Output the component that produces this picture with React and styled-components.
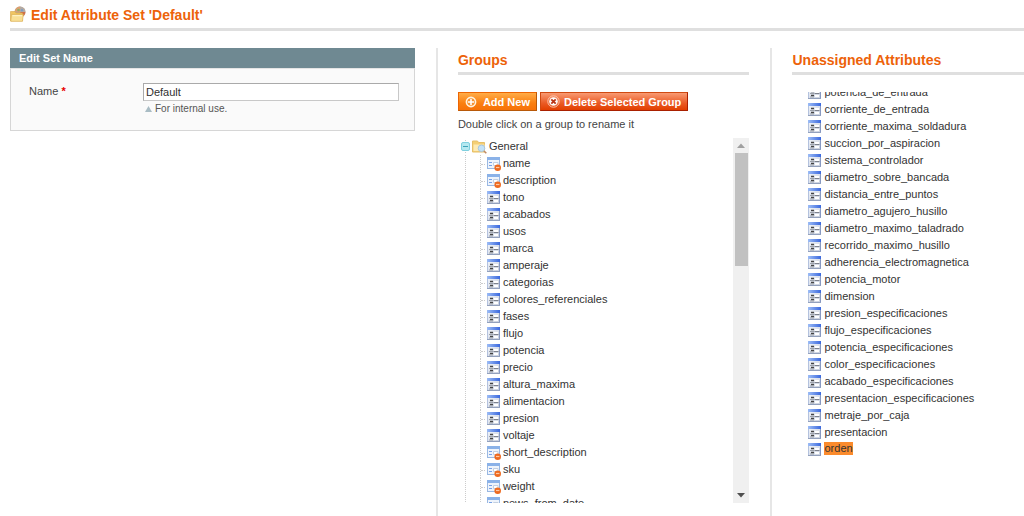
import React, { useState } from "react";
import styled, { createGlobalStyle, css } from "styled-components";

const GlobalStyle = createGlobalStyle`
  * {
    box-sizing: border-box;
  }

  body {
    margin: 0;
    background: #fff;
    color: #333;
    font-family: "Liberation Sans", Arial, sans-serif;
    font-size: 11px;
    line-height: 16px;
  }
`;

const Page = styled.div`
  display: flex;
  flex-direction: column;
  min-height: 100vh;
  padding-left: 10px;
`;

const PageHeader = styled.header`
  display: flex;
  align-items: center;
  gap: 5px;
  height: 31px;
  margin-bottom: 17px;
  border-bottom: 3px solid #dfdfdf;
`;

const PageTitle = styled.h1`
  margin: 0;
  padding-top: 2px;
  color: #ed6209;
  font-size: 14px;
  line-height: 16px;
`;

const Columns = styled.main`
  flex: 1;
  display: grid;
  grid-template-columns: 42% 33% 1fr;
`;

const Column = styled.section`
  min-width: 0;
  padding-right: ${({ $flush }) => ($flush ? "0" : "21px")};

  & + & {
    padding-left: 20px;
    border-left: 2px solid #e6e6e6;
  }
`;

const PanelTitle = styled.h2`
  margin: 0;
  padding: 0 9px;
  background: #6f8992;
  color: #fff;
  font-size: 11px;
  line-height: 20px;
`;

const PanelBody = styled.form`
  display: grid;
  grid-template-columns: 114px 1fr;
  padding: 14px 15px 13px 18px;
  border: 1px solid #d6d6d6;
  border-top-color: #e4e4e4;
  background: #fafafa;
`;

const FieldLabel = styled.label`
  color: #444;
`;

const Required = styled.span`
  color: #e80000;
  font-weight: bold;
`;

const TextInput = styled.input`
  display: block;
  width: 100%;
  height: 18px;
  padding: 0 2px;
  border: 1px solid;
  border-color: #aaa #c8c8c8 #c8c8c8 #aaa;
  background: #fff;
  color: #2f2f2f;
  font: inherit;
`;

const Hint = styled.p`
  display: flex;
  align-items: center;
  gap: 3px;
  margin: 0;
  padding-left: 2px;
  color: #555;
  font-size: 10px;
`;

const SectionTitle = styled.h2`
  margin: 0 0 17px;
  padding: 4px 0;
  border-bottom: 3px solid #dfdfdf;
  color: #ed6209;
  font-size: 14px;
  line-height: 16px;
`;

const ButtonRow = styled.div`
  display: flex;
  gap: 3px;
`;

const tones = {
  add: css`
    border-color: #ed6502 #b85909 #b85909 #ed6502;
    background: linear-gradient(#ffac47, #fa7f10 60%, #f77208);
  `,
  remove: css`
    border-color: #d04a12 #a92000 #a92000 #d04a12;
    background: linear-gradient(#f99a72, #ea5a24 60%, #e23f00);
  `,
};

const Button = styled.button`
  display: flex;
  align-items: center;
  gap: ${({ $tone }) => ($tone === "add" ? "6px" : "4px")};
  height: 19px;
  padding: 0 6px;
  border: 1px solid;
  color: #fff;
  font: inherit;
  font-weight: bold;
  white-space: nowrap;
  cursor: pointer;
  ${({ $tone }) => tones[$tone]}
`;

const Note = styled.p`
  margin: 0;
  padding: 5px 0 6px;
  color: #444;
`;

const TreeBox = styled.div`
  display: flex;
  height: 365px;
  overflow: hidden;
`;

const Tree = styled.ul`
  flex: 1;
  margin: 0;
  padding: 0 0 0 2px;
  list-style: none;
`;

const Branch = styled.ul`
  margin: 0 0 0 5px;
  padding: 0 0 0 14px;
  border-left: 1px dotted #ccc;
  list-style: none;
`;

const Row = styled.div`
  display: flex;
  align-items: flex-start;
  gap: 2px;
  height: 17px;

  svg {
    flex: none;
    margin-top: 2px;
  }
`;

const Leaf = styled(Row).attrs({ as: "li" })`
  border-left: 1px dotted #ccc;

  &::before {
    content: "";
    width: 4px;
    height: 9px;
    border-bottom: 1px dotted #ccc;
  }
`;

const Toggle = styled.button`
  display: flex;
  padding: 0;
  border: 0;
  background: none;
  cursor: pointer;
`;

const ScrollTrack = styled.div`
  display: flex;
  flex-direction: column;
  align-items: center;
  width: 16px;
  background: #f0f0f0;
`;

const ScrollArrow = styled.span`
  display: grid;
  place-items: center;
  width: 100%;
  height: 15px;
`;

const ScrollThumb = styled.div`
  width: 13px;
  height: 113px;
  margin-bottom: auto;
  background: #c1c1c1;
`;

const AttributeList = styled.ul`
  display: flex;
  flex-direction: column;
  justify-content: flex-end;
  height: 366px;
  margin: 0;
  padding: 0 0 0 16px;
  overflow: hidden;
  list-style: none;
`;

const AttributeRow = styled(Row).attrs({ as: "li" })`
  flex: none;
`;

const Label = styled.span`
  line-height: ${({ $selected }) => ($selected ? "13px" : "16px")};
  margin-top: ${({ $selected }) => ($selected ? "1px" : "0")};
  background: ${({ $selected }) => ($selected ? "#fb8b2c" : "none")};
`;

const groupAttributes = [
  { name: "name", system: true },
  { name: "description", system: true },
  { name: "tono" },
  { name: "acabados" },
  { name: "usos" },
  { name: "marca" },
  { name: "amperaje" },
  { name: "categorias" },
  { name: "colores_referenciales" },
  { name: "fases" },
  { name: "flujo" },
  { name: "potencia" },
  { name: "precio" },
  { name: "altura_maxima" },
  { name: "alimentacion" },
  { name: "presion" },
  { name: "voltaje" },
  { name: "short_description", system: true },
  { name: "sku", system: true },
  { name: "weight", system: true },
  { name: "news_from_date", system: true },
];

const unassigned = [
  "potencia_de_entrada",
  "corriente_de_entrada",
  "corriente_maxima_soldadura",
  "succion_por_aspiracion",
  "sistema_controlador",
  "diametro_sobre_bancada",
  "distancia_entre_puntos",
  "diametro_agujero_husillo",
  "diametro_maximo_taladrado",
  "recorrido_maximo_husillo",
  "adherencia_electromagnetica",
  "potencia_motor",
  "dimension",
  "presion_especificaciones",
  "flujo_especificaciones",
  "potencia_especificaciones",
  "color_especificaciones",
  "acabado_especificaciones",
  "presentacion_especificaciones",
  "metraje_por_caja",
  "presentacion",
  "orden",
];

function TitleIcon() {
  return (
    <svg width="16" height="16" viewBox="0 0 16 16" aria-hidden="true">
      <circle cx="10" cy="6" r="5.500" fill="#c3a58c" />
      <path d="M5 5a5.400 5.400 0 0 1 5-4.400V6z" fill="#dca070" />
      <path d="M10 .6A5.400 5.400 0 0 1 15.400 6H10z" fill="#b3aaa4" />
      <path d="M10 6h5.400a5.400 5.400 0 0 1-2 4.200z" fill="#cf7048" />
      <circle cx="8.500" cy="4" r="1.300" fill="#8fae6c" />
      <circle cx="12" cy="4.300" r="1.200" fill="#7f9cc0" />
      <path d="M.5 5.500H5l1 1.500h6.500v8H.5z" fill="#f0c562" stroke="#d9a848" strokeWidth=".6" />
      <path d="M1.500 8.500h11.800L12.500 15.300H.8z" fill="#f9e096" stroke="#dcb054" strokeWidth=".6" />
      <path d="M2.500 9.700h9.500" stroke="#fff5cc" />
    </svg>
  );
}

function FolderIcon() {
  return (
    <svg width="15" height="14" viewBox="0 0 15 14" aria-hidden="true">
      <path d="M.5 1h5l1 1.500h6V12H.5z" fill="#f5cf74" stroke="#e6bf68" />
      <path d="M1.500 4.500h11V11h-11z" fill="#fdeab4" />
      <circle cx="9.500" cy="8.300" r="3.300" fill="#c3e2f8" stroke="#a9c6dc" />
      <path d="m12 11 2.300 2.300" stroke="#c08a62" strokeWidth="1.600" />
    </svg>
  );
}

function CollapseIcon() {
  return (
    <svg width="10" height="14" viewBox="0 0 10 14" aria-hidden="true">
      <path d="M5.500 0v14" stroke="#ccc" strokeDasharray="1 1" />
      <rect x="1.500" y="2.500" width="8" height="8" rx="1.500" fill="#b5e8f0" stroke="#7fd0df" />
      <path d="M3 6.500h5" stroke="#3da3b8" />
    </svg>
  );
}

function AttributeIcon() {
  return (
    <svg width="14" height="13" viewBox="0 0 14 13" aria-hidden="true">
      <defs>
        <linearGradient id="attrBar">
          <stop offset="0" stopColor="#9dbdf6" />
          <stop offset="1" stopColor="#3a68de" />
        </linearGradient>
        <linearGradient id="attrBody" x2="1" y2="1">
          <stop offset="0" stopColor="#f4f7fc" />
          <stop offset="1" stopColor="#c6cedd" />
        </linearGradient>
      </defs>
      <rect x=".5" y=".5" width="12" height="12" fill="url(#attrBody)" stroke="#b4c2de" />
      <rect width="13" height="3" fill="url(#attrBar)" />
      <path d="M12.500 3v10" stroke="#8799c2" />
      <path d="M0 12.500h13" stroke="#93a1bd" />
      <path d="M3 5.500h3M3 9.500h3" stroke="#444" strokeWidth="1.400" />
      <path d="M2 7.500h4M2 11h4" stroke="#8a8f99" strokeWidth=".8" />
      <path d="M7 5h4v2H7zM7 9h4v2H7z" fill="#fff" />
      <path d="M6.500 7.500H11.500" stroke="#7d828d" />
    </svg>
  );
}

function SystemAttributeIcon() {
  return (
    <svg width="14" height="14" viewBox="0 0 14 14" aria-hidden="true">
      <rect x=".5" y=".5" width="12" height="11" fill="#eef4fc" stroke="#9ab8e2" />
      <rect width="13" height="3" fill="#8bb2e8" />
      <path d="M2 5.500h3M2 8.500h3" stroke="#77a1e6" />
      <path d="M6.500 5.500h4.500v3H6.500z" fill="#fff" stroke="#c3cfe0" />
      <circle cx="10.700" cy="10.700" r="3.300" fill="#ee6a20" />
      <path d="M9 10.500h3.400" stroke="#ffc9a3" strokeWidth="1.200" />
    </svg>
  );
}

function AddIcon() {
  return (
    <svg width="12" height="12" viewBox="0 0 12 12" aria-hidden="true">
      <circle cx="6" cy="6" r="4.600" fill="#f7912f" stroke="#fff3e0" strokeWidth="1.600" />
      <path d="M6 3v6M3 6h6" stroke="#fff" strokeWidth="1.600" />
    </svg>
  );
}

function DeleteIcon() {
  return (
    <svg width="13" height="13" viewBox="0 0 13 13" aria-hidden="true">
      <circle cx="6.500" cy="6.500" r="5.700" fill="none" stroke="#fbc4ad" />
      <circle cx="6.500" cy="6.500" r="4.300" fill="#fff" />
      <path d="m4.300 4.300 4.400 4.400m0-4.400-4.400 4.400" stroke="#b93516" strokeWidth="1.800" />
    </svg>
  );
}

function Triangle({ color, down }) {
  return (
    <svg width="8" height="5" viewBox="0 0 8 5" aria-hidden="true">
      <path d={down ? "M0 0h8L4 4.500z" : "M0 5h8L4 .5z"} fill={color} />
    </svg>
  );
}

function HintIcon() {
  return (
    <svg width="7" height="6" viewBox="0 0 7 6" aria-hidden="true">
      <path d="M0 6h7L3.500 0z" fill="#a9bcc4" />
    </svg>
  );
}

export default function App() {
  const [setName, setSetName] = useState("Default");
  const [open, setOpen] = useState(true);
  const [selected, setSelected] = useState("orden");

  return (
    <>
      <GlobalStyle />
      <Page>
        <PageHeader>
          <TitleIcon />
          <PageTitle>Edit Attribute Set 'Default'</PageTitle>
        </PageHeader>
        <Columns>
          <Column>
            <PanelTitle>Edit Set Name</PanelTitle>
            <PanelBody onSubmit={(e) => e.preventDefault()}>
              <FieldLabel htmlFor="set-name">
                Name <Required>*</Required>
              </FieldLabel>
              <div>
                <TextInput
                  id="set-name"
                  value={setName}
                  onChange={(e) => setSetName(e.target.value)}
                />
                <Hint>
                  <HintIcon />
                  For internal use.
                </Hint>
              </div>
            </PanelBody>
          </Column>
          <Column>
            <SectionTitle>Groups</SectionTitle>
            <ButtonRow>
              <Button type="button" $tone="add">
                <AddIcon />
                Add New
              </Button>
              <Button type="button" $tone="remove">
                <DeleteIcon />
                Delete Selected Group
              </Button>
            </ButtonRow>
            <Note>Double click on a group to rename it</Note>
            <TreeBox>
              <Tree>
                <li>
                  <Row>
                    <Toggle
                      type="button"
                      aria-label="Toggle General"
                      aria-expanded={open}
                      onClick={() => setOpen(!open)}
                    >
                      <CollapseIcon />
                    </Toggle>
                    <FolderIcon />
                    <Label>General</Label>
                  </Row>
                  {open && (
                    <Branch>
                      {groupAttributes.map(({ name, system }) => (
                        <Leaf key={name}>
                          {system ? <SystemAttributeIcon /> : <AttributeIcon />}
                          <Label>{name}</Label>
                        </Leaf>
                      ))}
                    </Branch>
                  )}
                </li>
              </Tree>
              <ScrollTrack>
                <ScrollArrow>
                  <Triangle color="#a0a0a0" />
                </ScrollArrow>
                <ScrollThumb />
                <ScrollArrow>
                  <Triangle color="#505050" down />
                </ScrollArrow>
              </ScrollTrack>
            </TreeBox>
          </Column>
          <Column $flush>
            <SectionTitle>Unassigned Attributes</SectionTitle>
            <AttributeList>
              {unassigned.map((name) => (
                <AttributeRow key={name} onClick={() => setSelected(name)}>
                  <AttributeIcon />
                  <Label $selected={name === selected}>{name}</Label>
                </AttributeRow>
              ))}
            </AttributeList>
          </Column>
        </Columns>
      </Page>
    </>
  );
}
